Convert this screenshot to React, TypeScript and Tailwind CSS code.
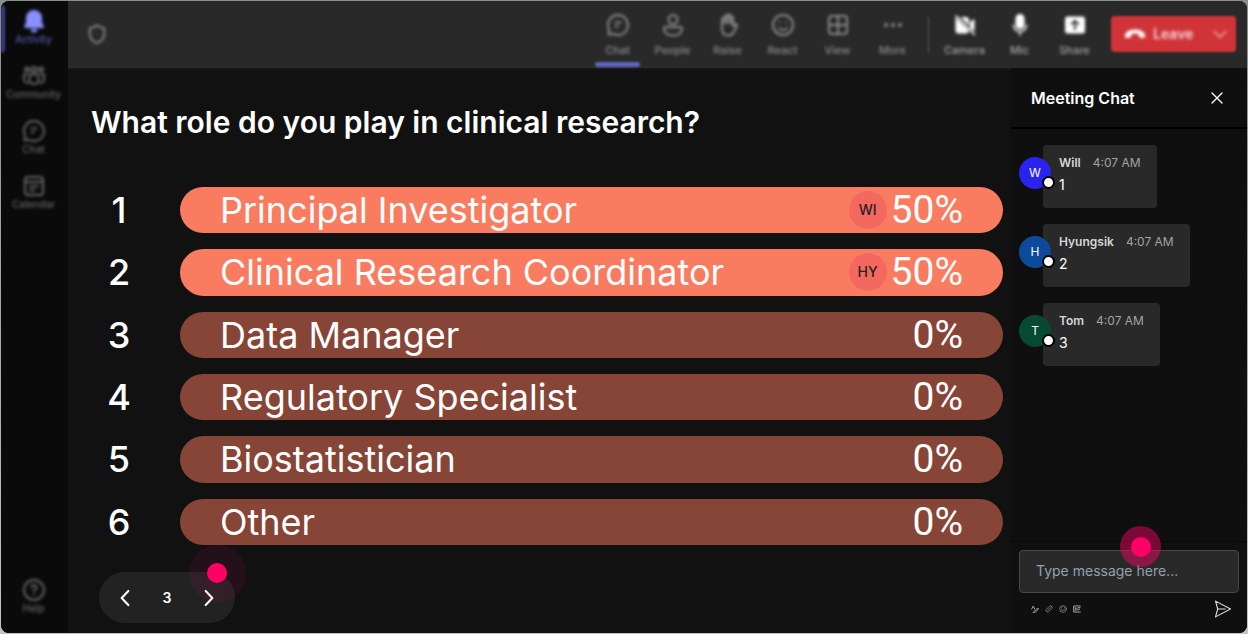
import type { ReactNode } from "react";

type IconProps = { children: ReactNode; className?: string; fill?: boolean };

function Icon({ children, className = "size-6", fill = false }: IconProps) {
  return (
    <svg
      viewBox="0 0 24 24"
      aria-hidden="true"
      className={className}
      fill={fill ? "currentColor" : "none"}
      stroke="currentColor"
      strokeWidth={fill ? 0 : 2}
      strokeLinecap="round"
      strokeLinejoin="round"
    >
      {children}
    </svg>
  );
}

const chatIcon = (
  <Icon>
    <path d="M12 2a10 10 0 1 1-4.600 18.900L2.500 21.500l.8-4.600A10 10 0 0 1 12 2Z" />
    <path d="M9.500 9.500h5M9.500 13.500h2" />
  </Icon>
);

const bellIcon = (
  <Icon fill>
    <path d="M12 1a8 8 0 0 0-8 8v4.500L2.200 17.600c-.3.800.2 1.400 1 1.400h17.600c.8 0 1.300-.6 1-1.400L20 13.500V9a8 8 0 0 0-8-8Z" />
    <path d="M8.500 20h7a3.500 3.500 0 0 1-7 0Z" />
  </Icon>
);

const communityIcon = (
  <Icon>
    <circle cx="12" cy="5.500" r="2.500" />
    <circle cx="5" cy="5.500" r="2" />
    <circle cx="19" cy="5.500" r="2" />
    <path d="M7.500 10.500h9v5a4.500 4.500 0 0 1-9 0v-5ZM4.500 10.500H2v4.500A4 4 0 0 0 6 19M19.500 10.500H22v4.500a4 4 0 0 1-4 4" />
  </Icon>
);

const calendarIcon = (
  <Icon>
    <rect x="3" y="3" width="18" height="18" rx="3" />
    <path d="M3 8h18M8 12.500h8M8 16.500h4" />
  </Icon>
);

const helpIcon = (
  <Icon>
    <circle cx="12" cy="12" r="10" />
    <path d="M9.500 9.500a2.500 2.500 0 1 1 3.800 2.100c-.8.500-1.300 1-1.300 1.900M12 17v.1" />
  </Icon>
);

const peopleIcon = (
  <Icon>
    <circle cx="12" cy="6.500" r="4.500" />
    <path d="M5 14h14a2 2 0 0 1 2 2c0 4-4 6.500-9 6.500S3 20 3 16a2 2 0 0 1 2-2Z" />
  </Icon>
);

const raiseIcon = (
  <Icon>
    <path d="M6 13V6.500a1.400 1.400 0 0 1 2.800 0V4a1.400 1.400 0 0 1 2.800 0V3a1.400 1.400 0 0 1 2.800 0v2a1.300 1.300 0 0 1 2.600 0v8l2-1.600c1-.8 2.600.2 2 1.400l-3.500 6.700C16.500 21.400 15 22.500 12.500 22.500 8.500 22.500 6 20 6 16v-3Z" />
    <path d="M8.800 6v4.500M11.600 4v6M14.400 5v5.500" />
  </Icon>
);

const reactIcon = (
  <Icon>
    <circle cx="12" cy="12" r="10" />
    <path d="M8 15a5 5 0 0 0 8 0M8.800 9.500v.1M15.200 9.500v.1" />
  </Icon>
);

const viewIcon = (
  <Icon>
    <rect x="3" y="3" width="18" height="18" rx="3" />
    <path d="M12 3v18M3 12h18" />
  </Icon>
);

const moreIcon = (
  <Icon fill>
    <circle cx="5" cy="12" r="2" />
    <circle cx="12" cy="12" r="2" />
    <circle cx="19" cy="12" r="2" />
  </Icon>
);

const cameraIcon = (
  <Icon fill>
    <path d="M7.500 4H13a3 3 0 0 1 3 3v5.500ZM2.500 4.500 16 18a3 3 0 0 1-3 2.500H5.500a3 3 0 0 1-3-3ZM17 9l4.500-3.300V18.300L17 15V9Z" />
    <path d="M2 3.200 3.200 2 22.500 21.300l-1.200 1.200Z" />
  </Icon>
);

const micIcon = (
  <Icon>
    <rect x="8.500" y="2" width="7" height="13" rx="3.500" fill="currentColor" />
    <path d="M5.500 12a6.500 6.500 0 0 0 13 0M12 19v3" strokeWidth="1.500" />
  </Icon>
);

const shareIcon = (
  <Icon fill>
    <path
      fillRule="evenodd"
      d="M4.500 3.500h15a2.500 2.500 0 0 1 2.500 2.500v12a2.500 2.500 0 0 1-2.500 2.500h-15A2.500 2.500 0 0 1 2 18V6a2.500 2.500 0 0 1 2.500-2.500ZM12 6.500 7.500 11l1.200 1.200 2.400-2.400V17h1.800V9.800l2.400 2.400L16.500 11Z"
    />
  </Icon>
);

const railItems = [
  { label: "Activity", icon: bellIcon, active: true },
  { label: "Community", icon: communityIcon, active: false },
  { label: "Chat", icon: chatIcon, active: false },
  { label: "Calendar", icon: calendarIcon, active: false },
];

const meetingActions = [
  { label: "Chat", icon: chatIcon, active: true },
  { label: "People", icon: peopleIcon, active: false },
  { label: "Raise", icon: raiseIcon, active: false },
  { label: "React", icon: reactIcon, active: false },
  { label: "View", icon: viewIcon, active: false },
  { label: "More", icon: moreIcon, active: false },
];

const deviceActions = [
  { label: "Camera", icon: cameraIcon },
  { label: "Mic", icon: micIcon },
  { label: "Share", icon: shareIcon },
];

const options = [
  { label: "Principal Investigator", percent: 50, voter: "WI" },
  { label: "Clinical Research Coordinator", percent: 50, voter: "HY" },
  { label: "Data Manager", percent: 0, voter: "" },
  { label: "Regulatory Specialist", percent: 0, voter: "" },
  { label: "Biostatistician", percent: 0, voter: "" },
  { label: "Other", percent: 0, voter: "" },
];

const messages = [
  { name: "Will", time: "4:07 AM", text: "1", color: "bg-[#2a23f0]" },
  { name: "Hyungsik", time: "4:07 AM", text: "2", color: "bg-[#0d4a9c]" },
  { name: "Tom", time: "4:07 AM", text: "3", color: "bg-[#064a32]" },
];

function RailButton({ label, icon, active }: { label: string; icon: ReactNode; active: boolean }) {
  return (
    <button
      type="button"
      className={`flex h-[55px] w-full flex-col items-center pt-2 pr-[2px] text-[10px] leading-3 font-medium blur-[1px] ${
        active ? "text-[#8a8fff]" : "text-[#666666]"
      }`}
    >
      <span className="blur-[1px]">{icon}</span>
      <span className={`blur-[1px] ${active ? "text-[#5659b4]" : ""}`}>{label}</span>
    </button>
  );
}

function Rail() {
  return (
    <nav aria-label="Apps" className="relative flex w-[67px] shrink-0 flex-col bg-[#0a0a0a] pb-2">
      <span className="absolute top-1 left-0 h-12 w-1 rounded-r bg-[#3d3f8a] blur-[1px]" />
      {railItems.map((item) => (
        <RailButton key={item.label} {...item} />
      ))}
      <div className="mt-auto">
        <RailButton label="Help" icon={helpIcon} active={false} />
      </div>
    </nav>
  );
}

function Toolbar() {
  return (
    <header className="flex h-[67px] items-stretch bg-[#292929] pr-[11px] pl-[18px] text-[11px] leading-3 font-medium text-[#8c8c8c] shadow-[0_0_3px_#292929]">
      <span className="mt-[22px] blur-[1px]">
        <Icon className="size-[22px] blur-[1px]">
          <path d="M12 2.500c2.500 2 5 2.800 8 3v6c0 5-3 8.300-8 10.500C7 19.800 4 16.500 4 11.500v-6c3-.2 5.500-1 8-3Z" />
        </Icon>
      </span>
      <div className="ml-auto flex">
        {meetingActions.map((a) => (
          <button
            key={a.label}
            type="button"
            className="relative flex w-[55px] flex-col items-center pt-3 blur-[1px]"
          >
            <span className="blur-[1px]">{a.icon}</span>
            <span className="mt-[7px] blur-[1px]">{a.label}</span>
            {a.active && <span className="absolute inset-x-[5px] bottom-[1px] h-[5px] rounded bg-[#6064c0]" />}
          </button>
        ))}
      </div>
      <span className="mx-2 mt-4 h-9 w-px bg-[#5a5a5a] blur-[1px]" />
      {deviceActions.map((a) => (
        <button
          key={a.label}
          type="button"
          className="flex w-[55px] flex-col items-center pt-3 text-white blur-[1px]"
        >
          <span className="blur-[1px]">{a.icon}</span>
          <span className="mt-[7px] text-[#a8a8a8] blur-[1px]">{a.label}</span>
        </button>
      ))}
      <div className="mt-[15px] ml-[9px] flex h-9 w-[125px] items-center rounded bg-[#d13438] text-white blur-[1px]">
        <button
          type="button"
          className="flex flex-1 items-center gap-[6px] pl-3 text-sm font-semibold text-[#f6d5d6] blur-[1px]"
        >
          <Icon fill className="size-6 text-white">
            <path d="M12 7.500c4.500 0 8 1.600 9.500 4.100.6 1.100.6 2.300.2 3.600-.2.700-.8 1-1.500.9l-3.200-.6c-.7-.1-1.100-.6-1.200-1.300l-.3-2.200c-2.200-.8-4.800-.8-7 0l-.3 2.200c-.1.700-.5 1.200-1.200 1.300l-3.200.6c-.7.100-1.300-.2-1.500-.9-.4-1.300-.4-2.500.2-3.600C4 9.100 7.500 7.500 12 7.500Z" />
          </Icon>
          Leave
        </button>
        <button type="button" aria-label="Leave options" className="flex w-8 justify-center text-[#f0b9ba] blur-[1px]">
          <Icon className="size-4">
            <path d="m3 8 9 9 9-9" />
          </Icon>
        </button>
      </div>
    </header>
  );
}

function Poll() {
  return (
    <main className="flex min-w-0 flex-1 flex-col pt-9 pr-2 pb-[10px] pl-[23px]">
      <h1 className="text-[30px] leading-9 font-semibold">What role do you play in clinical research?</h1>
      <ol className="mt-[47px] grid flex-1 auto-rows-fr gap-4 text-[36px] leading-10">
        {options.map((o, i) => (
          <li key={o.label} className="flex items-center">
            <span className="mr-[33px] w-14 shrink-0 text-center font-medium">{i + 1}</span>
            <div
              className={`flex h-full min-w-0 flex-1 items-center rounded-full px-10 ${
                o.percent > 0 ? "bg-[#fa7c60]" : "bg-[#864537]"
              }`}
            >
              <span className="flex-1">{o.label}</span>
              {o.voter && (
                <span className="mr-1 flex size-[38px] items-center justify-center rounded-full bg-[#f4695f] text-sm font-medium text-[#2b2224]">
                  {o.voter}
                </span>
              )}
              <span className="font-['Roboto',sans-serif] text-[39px]">{o.percent}%</span>
            </div>
          </li>
        ))}
      </ol>
      <div className="mt-[27px] ml-2 flex h-[51px] w-[136px] items-center justify-between rounded-full bg-[#222222] px-3">
        <button type="button" aria-label="Previous question" className="p-1">
          <Icon className="size-5">
            <path d="m16 3.500-8 8.500 8 8.500" strokeWidth="2.500" />
          </Icon>
        </button>
        <span className="text-sm font-semibold">3</span>
        <button type="button" aria-label="Next question" className="relative p-1">
          <Icon className="size-5">
            <path d="m8 3.500 8 8.500-8 8.500" strokeWidth="2.500" />
          </Icon>
          <span className="absolute -top-[39px] -left-[6px] flex size-[57px] items-center justify-center rounded-full bg-[#ff0066]/8">
            <span className="size-5 rounded-full bg-[#ff0066]" />
          </span>
        </button>
      </div>
    </main>
  );
}

function ChatPanel() {
  return (
    <aside className="flex w-[236px] shrink-0 flex-col bg-[#0f0f0f]">
      <div className="flex h-[61px] items-center justify-between border-b-2 border-black pr-[18px] pl-5">
        <h2 className="text-base font-semibold">Meeting Chat</h2>
        <button type="button" aria-label="Close chat" className="p-1">
          <Icon className="size-4">
            <path d="M4.500 4.500l15 15M19.500 4.500l-15 15" />
          </Icon>
        </button>
      </div>
      <ul className="flex flex-1 flex-col items-start gap-4 px-2 pt-4">
        {messages.map((m) => (
          <li key={m.name} className="flex">
            <span
              className={`relative z-10 mt-3 -mr-2 flex size-8 items-center justify-center rounded-full text-xs ${m.color}`}
            >
              {m.name[0]}
              <span className="absolute -right-1 bottom-0 size-[13px] rounded-full border-2 border-black bg-white" />
            </span>
            <div className="h-[63px] rounded bg-[#292929] px-4 pt-[10px]">
              <p className="flex gap-3 text-xs leading-4">
                <span className="font-semibold text-[#d6d6d6]">{m.name}</span>
                <time className="text-[#a3a3a3]">{m.time}</time>
              </p>
              <p className="mt-1 text-sm leading-5">{m.text}</p>
            </div>
          </li>
        ))}
      </ul>
      <form className="relative border-t border-[#080808] px-2 pt-2 pb-[14px]" onSubmit={(e) => e.preventDefault()}>
        <input
          type="text"
          aria-label="Message"
          placeholder="Type message here..."
          className="block h-[43px] w-full rounded border border-[#484848] bg-[#292929] px-4 pb-[2px] text-sm text-white outline-none placeholder:text-[#94a0b0]"
        />
        <span className="pointer-events-none absolute -top-4 left-[109px] flex size-[41px] items-center justify-center rounded-full bg-[#ff0066]/45">
          <span className="size-5 rounded-full bg-[#ff0066]" />
        </span>
        <div className="mt-[6px] flex h-5 items-center gap-[6px] pr-[7px] pl-3 text-[#a3a3a3]">
          <button type="button" aria-label="Format">
            <Icon className="size-2">
              <path d="M2 12 7 3l4 9M9 20l11-11 3 3-10 9-6 2Z" strokeWidth="3" />
            </Icon>
          </button>
          <button type="button" aria-label="Attach file">
            <Icon className="size-2">
              <path d="M20 4a5 5 0 0 0-7 0l-9 9a5 5 0 0 0 7 7l9-9a5 5 0 0 0 0-7ZM8 16l8-8" />
            </Icon>
          </button>
          <button type="button" aria-label="Emoji">
            <Icon className="size-2">
              <circle cx="12" cy="12" r="10" />
              <path d="M7 14a6 6 0 0 0 10 0M8 8v1M16 8v1" />
            </Icon>
          </button>
          <button type="button" aria-label="GIF">
            <Icon className="size-2">
              <path d="M22 3H2v18h20M7 8v8M12 9v7M16 8h5M16 13h4" strokeWidth="3" />
            </Icon>
          </button>
          <button type="submit" aria-label="Send" className="ml-auto text-[#e0e0e0]">
            <Icon className="size-[18px]">
              <path d="M2 1.500 22 12 2 22.500 5 12 2 1.500ZM5 12h10" strokeWidth="1.500" />
            </Icon>
          </button>
        </div>
      </form>
    </aside>
  );
}

export default function App() {
  return (
    <div className="flex min-h-screen bg-linear-to-b from-[#8b8f8c] to-[#c4c4c4] p-px font-['Inter',sans-serif] text-white">
      <div className="flex min-w-0 flex-1 overflow-hidden rounded-lg bg-[#111111]">
        <Rail />
        <div className="flex min-w-0 flex-1 flex-col">
          <Toolbar />
          <div className="flex flex-1">
            <Poll />
            <ChatPanel />
          </div>
        </div>
      </div>
    </div>
  );
}
